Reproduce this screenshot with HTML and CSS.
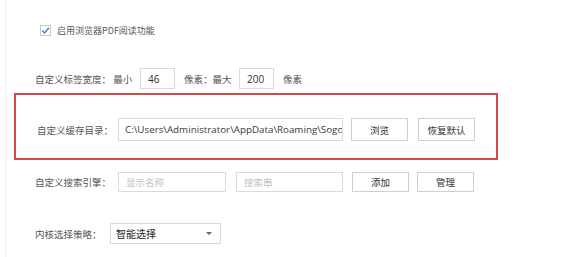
FILE: index.html
```html
<!DOCTYPE html>
<html lang="zh-CN">
<head>
<meta charset="utf-8">
<title>设置</title>
<link rel="stylesheet" href="styles.css">
</head>
<body>
<div class="page">
  <div class="row row-check">
    <span class="checkbox">
      <svg width="9" height="9" viewBox="0 0 9 9"><path d="M1.2 4.6 L3.6 7 L8 1.8" fill="none" stroke="#3f7fd4" stroke-width="1.4"/></svg>
    </span>
    <span class="check-label">启用浏览器PDF阅读功能</span>
  </div>

  <div class="row row-width">
    <span class="label lw-1">自定义标签宽度： 最小</span>
    <div class="field f-num">46</div>
    <span class="label lw-2">像素：最大</span>
    <div class="field f-num">200</div>
    <span class="label lw-3">像素</span>
  </div>

  <div class="highlight">
    <div class="row row-cache">
      <span class="label lw-cache">自定义缓存目录：</span>
      <div class="field f-path"><span class="path-text">C:\Users\Administrator\AppData\Roaming\SogouExplorer</span></div>
      <button class="btn b-browse">浏览</button>
      <button class="btn b-reset">恢复默认</button>
    </div>
  </div>

  <div class="row row-search">
    <span class="label lw-search">自定义搜索引擎：</span>
    <div class="field f-name placeholder">显示名称</div>
    <div class="field f-query placeholder">搜索串</div>
    <button class="btn b-add">添加</button>
    <button class="btn b-manage">管理</button>
  </div>

  <div class="row row-kernel">
    <span class="label lw-kernel">内核选择策略：</span>
    <div class="select">
      <span class="select-text">智能选择</span>
      <span class="arrow"></span>
    </div>
  </div>
</div>
</body>
</html>
```

FILE: styles.css
```css
* { box-sizing: border-box; }
html, body { margin: 0; padding: 0; background: #fff; }
body {
  font-family: "Noto Sans CJK SC", "Open Sans", sans-serif;
  font-size: 9.5px;
  color: #555;
  width: 568px;
  height: 257px;
  overflow: hidden;
}
.page {
  margin-left: 5px;
  border-left: 1px solid #f1f1f1;
  height: 257px;
  padding-top: 25px;
}
.row {
  display: flex;
  align-items: center;
}
.row-check {
  height: 11px;
  padding-left: 34px;
}
.checkbox {
  width: 11px;
  height: 11px;
  border: 1px solid #c9c9c9;
  background: #fff;
  display: flex;
  align-items: center;
  justify-content: center;
}
.check-label {
  margin-left: 6px;
  color: #555;
  font-size: 9px;
}
.label { white-space: nowrap; color: #555; }
.row-width {
  margin-top: 32px;
  height: 21px;
  padding-left: 29px;
}
.lw-1 { width: 105px; }
.lw-2 { width: 64px; padding-left: 9px; }
.lw-3 { padding-left: 9px; }
.field {
  height: 100%;
  border: 1px solid #dadada;
  background: #fff;
  color: #333;
  font-family: "Open Sans", "Noto Sans CJK SC", sans-serif;
  font-size: 10px;
  display: flex;
  align-items: center;
  white-space: nowrap;
  overflow: hidden;
}
.f-num { width: 35px; padding-left: 7px; }
.highlight {
  margin-top: 4px;
  margin-left: 8px;
  width: 484px;
  height: 67px;
  border: 2px solid #d34a4a;
  padding-top: 23px;
}
.row-cache {
  height: 23px;
  padding-left: 21px;
}
.lw-cache { width: 81px; }
.f-path { width: 225px; padding-left: 6px; padding-right: 1px; }
.path-text { color: #3a3a3a; font-size: 9.8px; }
.btn {
  height: 100%;
  background: #fff;
  border: 1px solid #cfcfcf;
  font-family: "Noto Sans CJK SC", sans-serif;
  font-size: 9.5px;
  color: #333;
  padding: 0;
  width: 57px;
}
.b-browse { margin-left: 8px; }
.b-reset { margin-left: 10px; }
.row-search {
  margin-top: 12px;
  height: 20px;
  padding-left: 29px;
}
.lw-search { width: 83px; }
.f-name { width: 108px; padding-left: 7px; }
.f-query { width: 107px; margin-left: 10px; padding-left: 7px; }
.placeholder { color: #c2c2c2; font-family: "Noto Sans CJK SC", sans-serif; font-size: 9.5px; }
.b-add { margin-left: 9px; }
.b-manage { margin-left: 8px; }
.row-kernel {
  margin-top: 31px;
  height: 21px;
  padding-left: 29px;
}
.lw-kernel { width: 75px; }
.select {
  width: 111px;
  height: 100%;
  border: 1px solid #dadada;
  display: flex;
  align-items: center;
  justify-content: space-between;
  padding: 0 8px 0 5px;
  color: #222;
  font-size: 10px;
}
.arrow {
  width: 0;
  height: 0;
  border-left: 3px solid transparent;
  border-right: 3px solid transparent;
  border-top: 3px solid #666;
}
```
